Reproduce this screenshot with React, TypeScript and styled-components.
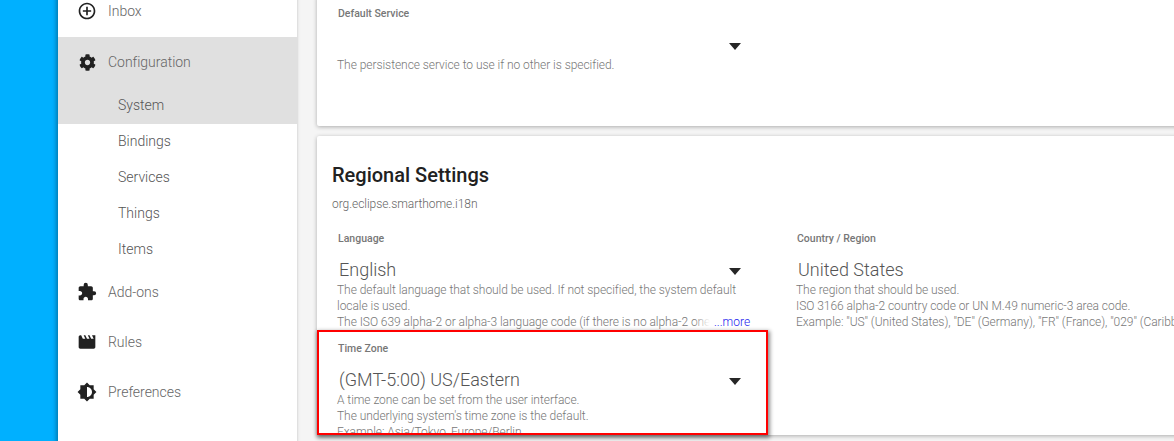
import React from "react";
import styled, { createGlobalStyle } from "styled-components";
import { MdAddCircleOutline, MdExtension, MdMovie, MdBrightnessMedium } from "react-icons/md";
import { FaCog } from "react-icons/fa";

const GlobalStyle = createGlobalStyle`
  html, body {
    margin: 0;
    padding: 0;
    background: #f5f5f5;
    font-family: Roboto, "Liberation Sans", sans-serif;
  }
`;

const Page = styled.div`
  display: flex;
  width: 1174px;
  height: 441px;
  overflow: hidden;
`;

const Strip = styled.div`
  flex: none;
  width: 58px;
  background: #00b0ff;
`;

const Sidebar = styled.nav`
  flex: none;
  width: 239px;
  margin-top: -14px;
  height: 470px;
  background: #fff;
  border-right: 1px solid #e0e0e0;
  box-shadow: -2px 0 4px rgba(0, 0, 0, 0.3);
`;

const NavItem = styled.div`
  display: flex;
  align-items: center;
  height: 50px;
  padding-left: 19px;
  font-size: 14px;
  letter-spacing: -0.02px;
  color: #666;

  svg {
    flex: none;
    width: 20px;
    height: 20px;
    color: #212121;
  }
`;

const GearIcon = styled(FaCog)`
  && {
    width: 17px;
    height: 17px;
    margin: 0 1.5px;
  }
`;

const NavLabel = styled.span`
  margin-left: 11px;
  font-weight: 300;
`;

const ActiveGroup = styled.div`
  background: #e0e0e0;
  height: 87px;
  margin-top: 1px;
`;

const SubItem = styled.div`
  height: 36px;
  line-height: 36px;
  padding-left: 60px;
  font-size: 14px;
  font-weight: 300;
  color: #555;
`;

const SubList = styled.div`
  margin-top: -1px;
`;

const Main = styled.main`
  flex: none;
  width: 877px;
  padding-left: 19px;
  box-sizing: border-box;
`;

const Card = styled.section`
  width: 1000px;
  background: #fff;
  border-radius: 2px;
  box-shadow: 0 1px 4px rgba(0, 0, 0, 0.3);
`;

const ServiceCard = styled(Card)`
  margin-top: -5px;
  padding-bottom: 21px;
`;

const RegionalCard = styled(Card)`
  margin-top: 10px;
  padding-top: 25px;
`;

const Title = styled.h2`
  margin: 0 0 0 15px;
  font-size: 20px;
  font-weight: 500;
  line-height: 28px;
  color: #212121;
`;

const Subtitle = styled.div`
  margin: 7px 0 8px 15px;
  font-size: 12px;
  font-weight: 300;
  line-height: 17px;
  letter-spacing: -0.05px;
  color: #666;
`;

const FieldGrid = styled.div`
  display: grid;
  grid-template-columns: 459px 459px;
  align-items: start;
  margin-top: -1px;
`;

const Field = styled.div`
  box-sizing: border-box;
  height: 110px;
  padding: 11px 0 0 20px;
  overflow: hidden;
  position: relative;
`;

const MarkedField = styled(Field)`
  width: 451px;
  height: 105px;
  padding: 9px 0 0 18px;
  border: 2px solid #ff0000;
  box-shadow: 1px 2px 4px 1px rgba(0, 0, 0, 0.45);
`;

const Label = styled.div`
  margin-left: 1px;
  font-size: 10.5px;
  font-weight: 500;
  line-height: 16px;
  color: #777;
`;

const ValueRow = styled.div`
  display: flex;
  align-items: center;
  justify-content: space-between;
  box-sizing: border-box;
  width: 404px;
  height: 24px;
  margin-top: 10px;
  padding-left: 2px;
`;

const Value = styled.span`
  font-size: 18px;
  font-weight: 300;
  color: #555;
`;

const Arrow = styled.span`
  width: 0;
  height: 0;
  margin-top: 4px;
  border-left: 6px solid transparent;
  border-right: 6px solid transparent;
  border-top: 7px solid #262626;
`;

const Hint = styled.div`
  width: 413px;
  margin-top: 1px;
  font-size: 12px;
  font-weight: 300;
  line-height: 16px;
  letter-spacing: -0.05px;
  color: #777;
`;

const HintLine = styled.div`
  white-space: nowrap;
`;

const More = styled.a`
  position: absolute;
  left: 377px;
  top: 94px;
  padding-left: 20px;
  font-size: 12px;
  font-weight: 300;
  line-height: 16px;
  color: #2222ee;
  background: linear-gradient(to right, rgba(255, 255, 255, 0), #fff 16px);
`;

const subItems = ["Bindings", "Services", "Things", "Items"];

export default function App(): JSX.Element {
  return (
    <Page>
      <GlobalStyle />
      <Strip />
      <Sidebar>
        <NavItem>
          <MdAddCircleOutline />
          <NavLabel>Inbox</NavLabel>
        </NavItem>
        <ActiveGroup>
          <NavItem>
            <GearIcon />
            <NavLabel>Configuration</NavLabel>
          </NavItem>
          <SubItem>System</SubItem>
        </ActiveGroup>
        <SubList>
          {subItems.map((name) => (
            <SubItem key={name}>{name}</SubItem>
          ))}
        </SubList>
        <NavItem>
          <MdExtension />
          <NavLabel>Add-ons</NavLabel>
        </NavItem>
        <NavItem>
          <MdMovie />
          <NavLabel>Rules</NavLabel>
        </NavItem>
        <NavItem>
          <MdBrightnessMedium />
          <NavLabel>Preferences</NavLabel>
        </NavItem>
      </Sidebar>
      <Main>
        <ServiceCard>
          <Field>
            <Label>Default Service</Label>
            <ValueRow>
              <Value />
              <Arrow />
            </ValueRow>
            <Hint>The persistence service to use if no other is specified.</Hint>
          </Field>
        </ServiceCard>
        <RegionalCard>
          <Title>Regional Settings</Title>
          <Subtitle>org.eclipse.smarthome.i18n</Subtitle>
          <FieldGrid>
            <div>
              <Field>
                <Label>Language</Label>
                <ValueRow>
                  <Value>English</Value>
                  <Arrow />
                </ValueRow>
                <Hint>
                  The default language that should be used. If not specified, the system default locale is used.
                  <HintLine>The ISO 639 alpha-2 or alpha-3 language code (if there is no alpha-2 one</HintLine>
                </Hint>
                <More>...more</More>
              </Field>
              <MarkedField>
                <Label>Time Zone</Label>
                <ValueRow>
                  <Value>(GMT-5:00) US/Eastern</Value>
                  <Arrow />
                </ValueRow>
                <Hint>
                  <HintLine>A time zone can be set from the user interface.</HintLine>
                  <HintLine>The underlying system's time zone is the default.</HintLine>
                  <HintLine>Example: Asia/Tokyo, Europe/Berlin</HintLine>
                </Hint>
              </MarkedField>
            </div>
            <Field>
              <Label>Country / Region</Label>
              <ValueRow>
                <Value>United States</Value>
              </ValueRow>
              <Hint>
                <HintLine>The region that should be used.</HintLine>
                <HintLine>ISO 3166 alpha-2 country code or UN M.49 numeric-3 area code.</HintLine>
                <HintLine>Example: "US" (United States), "DE" (Germany), "FR" (France), "029" (Caribbean)</HintLine>
              </Hint>
            </Field>
          </FieldGrid>
        </RegionalCard>
      </Main>
    </Page>
  );
}
